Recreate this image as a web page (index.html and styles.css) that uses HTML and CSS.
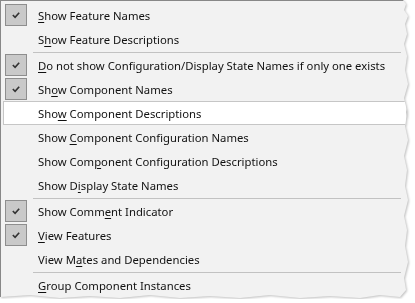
FILE: index.html
```html
<!DOCTYPE html>
<html lang="en">

<head>
    <meta charset="UTF-8">
    <title>Menu</title>
    <link rel="stylesheet" href="styles.css">
</head>

<body>
    <div class="shadow">
        <div class="menu">
            <div class="item checked"><span class="box"><svg viewBox="0 0 22 22"><path d="M7.5 11 L10 13.5 L14.5 8.5" /></svg></span><span class="label"><u>S</u>how Feature Names</span></div>
            <div class="item"><span class="box"></span><span class="label">S<u>h</u>ow Feature Descriptions</span></div>
            <div class="sep"></div>
            <div class="item checked"><span class="box"><svg viewBox="0 0 22 22"><path d="M7.5 11 L10 13.5 L14.5 8.5" /></svg></span><span class="label"><u>D</u>o not show Configuration/Display State Names if only one exists</span></div>
            <div class="item checked"><span class="box"><svg viewBox="0 0 22 22"><path d="M7.5 11 L10 13.5 L14.5 8.5" /></svg></span><span class="label">Sh<u>o</u>w Component Names</span></div>
            <div class="item hover"><span class="box"></span><span class="label">Sho<u>w</u> Component Descriptions</span></div>
            <div class="item"><span class="box"></span><span class="label">Show <u>C</u>omponent Configuration Names</span></div>
            <div class="item"><span class="box"></span><span class="label">Show Com<u>p</u>onent Configuration Descriptions</span></div>
            <div class="item"><span class="box"></span><span class="label">Show D<u>i</u>splay State Names</span></div>
            <div class="sep"></div>
            <div class="item checked"><span class="box"><svg viewBox="0 0 22 22"><path d="M7.5 11 L10 13.5 L14.5 8.5" /></svg></span><span class="label">Show Comm<u>e</u>nt Indicator</span></div>
            <div class="item checked"><span class="box"><svg viewBox="0 0 22 22"><path d="M7.5 11 L10 13.5 L14.5 8.5" /></svg></span><span class="label"><u>V</u>iew Features</span></div>
            <div class="item"><span class="box"></span><span class="label">View M<u>a</u>tes and Dependencies</span></div>
            <div class="sep"></div>
            <div class="item"><span class="box"></span><span class="label"><u>G</u>roup Component Instances</span></div>
        </div>
    </div>
</body>

</html>
```

FILE: styles.css
```css
* {
    margin: 0;
    padding: 0;
    box-sizing: border-box;
}

body {
    background: #fff;
    font-family: "Noto Sans", "Open Sans", sans-serif;
    font-size: 11.3px;
    color: #111;
}

.shadow {
    width: 412px;
    filter: drop-shadow(1px 1px 1px rgba(0, 0, 0, 0.25));
}

.menu {
    width: 410px;
    height: 299px;
    background: #f2f2f2;
    border-top: 1px solid #888;
    border-left: 1px solid #888;
    padding-top: 2px;
    clip-path: polygon(0 0, 403px 0, 406px 4px, 404px 10px, 408px 16px, 405px 24px, 407px 34px, 404px 44px, 407px 56px, 405px 70px, 408px 84px, 404px 98px, 407px 112px, 405px 126px, 408px 140px, 404px 156px, 407px 170px, 405px 186px, 408px 200px, 404px 216px, 407px 230px, 405px 246px, 408px 262px, 404px 278px, 406px 290px, 400px 297px, 380px 295px, 360px 298px, 330px 296px, 300px 298px, 270px 295px, 240px 298px, 210px 296px, 180px 298px, 150px 295px, 120px 298px, 90px 296px, 60px 298px, 30px 295px, 0 297px);
}

.item {
    display: flex;
    align-items: center;
    height: 24px;
    padding-left: 4px;
    white-space: nowrap;
}

.item.hover {
    background: #fff;
    border: 1px solid #c6c6c6;
    margin-left: 2px;
    margin-right: 3px;
    padding-left: 1px;
}

.box {
    display: flex;
    align-items: center;
    justify-content: center;
    width: 22px;
    height: 22px;
    flex: none;
    border: 1px solid transparent;
}

.checked .box {
    background: #c9c9c9;
    border-color: #8e8e8e;
}

.box svg {
    width: 20px;
    height: 20px;
}

.box svg path {
    fill: none;
    stroke: #333;
    stroke-width: 1.8;
}

.label {
    margin-left: 11px;
    padding-top: 1px;
}

.label u {
    text-underline-offset: 2px;
}

.sep {
    height: 2px;
    margin-left: 32px;
    margin-right: 9px;
    border-bottom: 1px solid #c2c2c2;
}
```
